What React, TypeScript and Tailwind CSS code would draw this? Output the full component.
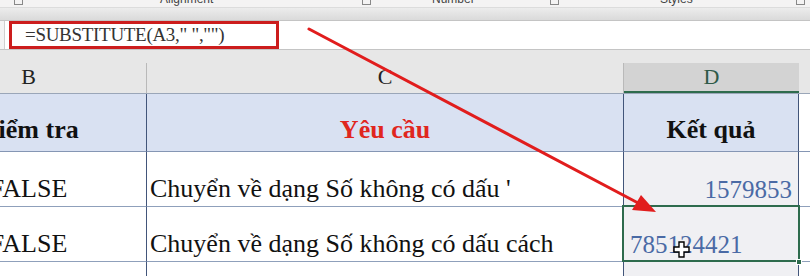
import React from "react";

function RibbonLabels() {
  const labels = [
    { x: 160, text: "Alignment" },
    { x: 432, text: "Number" },
    { x: 660, text: "Styles" },
  ];
  const launchers = [14, 362, 550, 796];
  return (
    <div className="relative h-[7px] overflow-hidden bg-[#f4f3f3] font-['Liberation_Sans'] text-[12px] text-[#444]">
      {labels.map((l) => (
        <span key={l.text} className="absolute top-[-8px] leading-[14px]" style={{ left: l.x }}>
          {l.text}
        </span>
      ))}
      {launchers.map((x) => (
        <span
          key={x}
          className="absolute top-[-4px] h-[9px] w-[9px] border border-[#888]"
          style={{ left: x }}
        />
      ))}
    </div>
  );
}

function CellCursor() {
  return (
    <svg width="17" height="17" viewBox="0 0 17 17" className="absolute left-[673px] top-[241px]">
      <path
        d="M6 1h5v5h5v5h-5v5H6v-5H1V6h5z"
        fill="#fff"
        stroke="#000"
        strokeWidth="1.4"
        strokeLinejoin="miter"
      />
    </svg>
  );
}

function Arrow() {
  return (
    <svg width="810" height="276" className="pointer-events-none absolute left-0 top-0">
      <line x1="309" y1="29" x2="640" y2="204" stroke="#e11d1d" strokeWidth="3" strokeLinecap="round" />
      <polygon points="656,212 632,210 641,195" fill="#e11d1d" />
    </svg>
  );
}

export default function App() {
  return (
    <div className="relative h-[276px] w-[810px] overflow-hidden bg-white font-['Liberation_Serif']">
      <RibbonLabels />
      <div className="h-[13px] border-t border-[#dcdcdc] bg-gradient-to-b from-[#ececec] to-[#dadada]" />

      {/* formula bar */}
      <div className="flex h-[30px] border-y border-[#c4c4c4] bg-white">
        <div className="w-[5px] border-r border-[#cfcfcf] bg-[#f3f3f3]" />
        <div className="ml-[4px] flex h-[28px] w-[270px] items-center border-[3px] border-[#cc1d1d] pl-[13px] text-[19px] tracking-[-0.3px] text-[#333]">
          =SUBSTITUTE(A3," ","")
        </div>
      </div>

      {/* column headers */}
      <div className="h-[13px] bg-[#e7e7e7]" />
      <div className="flex h-[31px] border-b border-[#9aa6b8] bg-[#e7e7e7] text-[22px] leading-none text-[#222]">
        <div className="-ml-[89px] flex w-[236px] shrink-0 items-end justify-center border-r border-[#b9b9b9] pb-[5px]">B</div>
        <div className="flex w-[477px] shrink-0 items-end justify-center border-r border-[#b9b9b9] pb-[5px]">C</div>
        <div className="flex w-[175px] shrink-0 items-end justify-center border-b-2 border-[#2e6b4d] bg-[#d3d3d3] pb-[3px] text-[#2e5a48]">D</div>
        <div className="flex-1" />
      </div>

      {/* row 1: table headings */}
      <div className="flex h-[58px] text-[26px] font-bold leading-none">
        <div className="-ml-[89px] flex w-[236px] shrink-0 items-end justify-center whitespace-nowrap border-b border-r border-b-[#8596b4] border-r-[#42557a] bg-[#d9e1f2] pb-[8px] text-[#111]">
          Kiểm tra
        </div>
        <div className="flex w-[477px] shrink-0 items-end justify-center border-b border-r border-b-[#8596b4] border-r-[#42557a] bg-[#d9e1f2] pb-[8px] text-[#e0261e]">
          Yêu cầu
        </div>
        <div className="flex w-[175px] shrink-0 items-end justify-center border-b border-r border-b-[#8596b4] border-r-[#42557a] bg-[#d9e1f2] pb-[8px] text-[#111]">
          Kết quả
        </div>
        <div className="flex-1 border-b border-[#8596b4] bg-white" />
      </div>

      {/* row 2 */}
      <div className="flex h-[55px] text-[26px] leading-none text-[#111]">
        <div className="-ml-[89px] flex w-[236px] shrink-0 items-end justify-center border-b border-r border-b-[#8fa0bb] border-r-[#42557a] pb-[4px]">
          FALSE
        </div>
        <div className="flex w-[477px] shrink-0 items-end whitespace-nowrap border-b border-r border-b-[#8fa0bb] border-r-[#42557a] pb-[4px] pl-[3px]">
          Chuyển về dạng Số không có dấu '
        </div>
        <div className="flex w-[175px] shrink-0 items-end justify-end border-b border-r border-b-[#8fa0bb] border-r-[#42557a] bg-[#f0f0f3] pb-[4px] pr-[6px] text-[25px] text-[#4a6aa5]">
          1579853
        </div>
        <div className="flex-1 border-b border-[#8fa0bb]" />
      </div>

      {/* row 3 */}
      <div className="flex h-[55px] text-[26px] leading-none text-[#111]">
        <div className="-ml-[89px] flex w-[236px] shrink-0 items-end justify-center border-b border-r border-b-[#8fa0bb] border-r-[#42557a] pb-[4px]">
          FALSE
        </div>
        <div className="flex w-[477px] shrink-0 items-end whitespace-nowrap border-b border-r border-b-[#8fa0bb] border-r-[#42557a] pb-[4px] pl-[3px]">
          Chuyển về dạng Số không có dấu cách
        </div>
        <div className="relative flex w-[175px] shrink-0 items-end border-b border-r border-b-[#8fa0bb] border-r-[#42557a] bg-[#f0f0f3] pb-[4px] pl-[6px] text-[25px] text-[#4a6aa5]">
          785124421
          <div className="absolute -left-[2px] -top-[2px] h-[57px] w-[178px] border-2 border-[#2e6b4d]" />
          <div className="absolute -bottom-[4px] -right-[4px] h-[6px] w-[6px] border border-white bg-[#2e6b4d]" />
        </div>
        <div className="flex-1 border-b border-[#8fa0bb]" />
      </div>

      {/* row 4 */}
      <div className="flex h-[20px]">
        <div className="-ml-[89px] w-[236px] shrink-0 border-r border-[#42557a]" />
        <div className="w-[477px] shrink-0 border-r border-[#42557a]" />
        <div className="w-[175px] shrink-0 border-r border-[#42557a] bg-[#f0f0f3]" />
        <div className="flex-1" />
      </div>

      <Arrow />
      <CellCursor />
    </div>
  );
}
